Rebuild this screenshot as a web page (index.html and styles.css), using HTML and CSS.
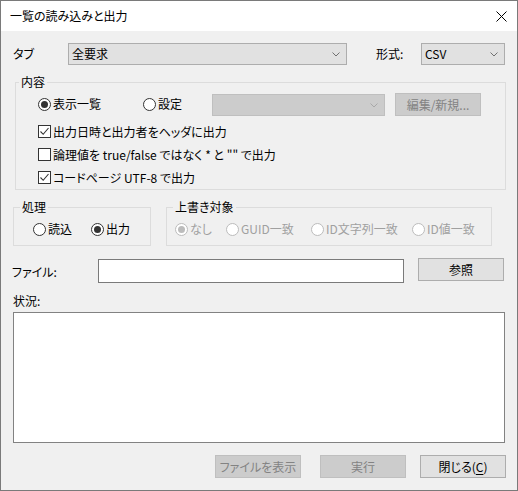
FILE: index.html
```html
<!DOCTYPE html>
<html lang="ja">
<head>
<meta charset="utf-8">
<title>一覧の読み込みと出力</title>
<link rel="stylesheet" href="styles.css">
</head>
<body>
<div class="window">
  <div class="titlebar">
    <span class="title">一覧の読み込みと出力</span>
    <svg class="close" width="11" height="11" viewBox="0 0 11 11"><path d="M0.5 0.5 L10.5 10.5 M10.5 0.5 L0.5 10.5" stroke="#000" stroke-width="1" fill="none"/></svg>
  </div>
  <div class="content">
    <div class="tab-row">
      <span class="lbl-tab">タブ</span>
      <div class="combo combo-tab"><span>全要求</span><svg class="chev" width="8" height="5" viewBox="0 0 8 5"><path d="M0.5 0.5 L4 4 L7.5 0.5" stroke="#707070" fill="none"/></svg></div>
      <span class="lbl-format">形式:</span>
      <div class="combo combo-format"><span>CSV</span><svg class="chev" width="8" height="5" viewBox="0 0 8 5"><path d="M0.5 0.5 L4 4 L7.5 0.5" stroke="#707070" fill="none"/></svg></div>
    </div>

    <fieldset class="group group-content">
      <legend>内容</legend>
      <div class="group-body">
        <div class="mode-row">
          <label class="opt opt-list"><span class="radio checked"></span>表示一覧</label>
          <label class="opt opt-setting"><span class="radio"></span>設定</label>
          <div class="combo combo-disabled"><span></span><svg class="chev" width="8" height="5" viewBox="0 0 8 5"><path d="M0.5 0.5 L4 4 L7.5 0.5" stroke="#a8a8a8" fill="none"/></svg></div>
          <button class="btn disabled btn-edit">編集/新規...</button>
        </div>
        <label class="check-row"><span class="checkbox checked"><svg width="11" height="11" viewBox="0 0 11 11"><path d="M1.5 5.5 L4.2 8.3 L9.5 2" stroke="#333" stroke-width="1.1" fill="none"/></svg></span>出力日時と出力者をヘッダに出力</label>
        <label class="check-row"><span class="checkbox"></span>論理値を true/false ではなく * と "" で出力</label>
        <label class="check-row"><span class="checkbox checked"><svg width="11" height="11" viewBox="0 0 11 11"><path d="M1.5 5.5 L4.2 8.3 L9.5 2" stroke="#333" stroke-width="1.1" fill="none"/></svg></span>コードページ UTF-8 で出力</label>
      </div>
    </fieldset>

    <div class="groups-row">
      <fieldset class="group group-process">
        <legend>処理</legend>
        <div class="radio-row">
          <label class="opt opt-read"><span class="radio"></span>読込</label>
          <label class="opt"><span class="radio checked"></span>出力</label>
        </div>
      </fieldset>
      <fieldset class="group group-overwrite">
        <legend>上書き対象</legend>
        <div class="radio-row">
          <label class="opt off w-none"><span class="radio checked"></span>なし</label>
          <label class="opt off w-guid"><span class="radio"></span>GUID一致</label>
          <label class="opt off w-idstr"><span class="radio"></span>ID文字列一致</label>
          <label class="opt off"><span class="radio"></span>ID値一致</label>
        </div>
      </fieldset>
    </div>

    <div class="file-row">
      <span class="lbl-file">ファイル:</span>
      <div class="textbox file-box"></div>
      <button class="btn">参照</button>
    </div>

    <div class="lbl-status">状況:</div>
    <div class="textbox status-box"></div>

    <div class="button-row">
      <button class="btn disabled">ファイルを表示</button>
      <button class="btn disabled btn-run">実行</button>
      <button class="btn">閉じる(<u>C</u>)</button>
    </div>
  </div>
</div>
</body>
</html>
```

FILE: styles.css
```css
* { box-sizing: border-box; }
html, body { margin: 0; padding: 0; background: #f0f0f0; }
body {
  font-family: "Noto Sans CJK JP", sans-serif;
  font-size: 12px;
  line-height: 16px;
  color: #000;
  font-feature-settings: "palt";
}
.window {
  width: 518px;
  height: 491px;
  border: 1px solid #7a7a7a;
  background: #f0f0f0;
}
.titlebar {
  height: 30px;
  background: #fff;
  display: flex;
  align-items: center;
  justify-content: space-between;
  padding: 0 10px 0 9px;
}
.title { font-size: 12px; }
.close { display: block; }
.content { padding: 0 11px 0 12px; }

.tab-row {
  margin-top: 12px;
  height: 22px;
  display: flex;
  align-items: center;
}
.lbl-tab { width: 55px; }
.lbl-format { width: 45px; margin-left: 29px; }
.combo {
  height: 22px;
  border: 1px solid #adadad;
  background: #e1e1e1;
  display: flex;
  align-items: center;
  justify-content: space-between;
  padding: 0 6px 0 3px;
}
.combo-tab { width: 279px; }
.combo-format { width: 84px; }
.combo-disabled {
  width: 173px;
  background: #cccccc;
  border-color: #bfbfbf;
  margin-top: 1px;
}
.chev { display: block; }

.group {
  margin: 0;
  padding: 0;
  border: 1px solid #dcdcdc;
  min-width: 0;
}
.group legend {
  padding: 0 2px;
  line-height: 14px;
}
.group-content {
  margin: 10px 0 0 2px;
}
.group-content legend { margin-left: 3px; }
.group-body { padding-left: 22px; }
.mode-row {
  margin-top: 4px;
  height: 23px;
  display: flex;
  align-items: flex-start;
}
.opt {
  display: flex;
  align-items: center;
  height: 22px;
  white-space: nowrap;
}
.opt-list { width: 105px; }
.opt-setting { width: 69px; }
.btn-edit { margin-left: 10px; }
.check-row {
  display: flex;
  align-items: center;
  height: 23px;
  white-space: nowrap;
}
.mode-row + .check-row { margin-top: 4px; }

.radio {
  width: 13px;
  height: 13px;
  border: 1px solid #333;
  border-radius: 50%;
  background: #fff;
  margin-right: 2px;
  display: flex;
  align-items: center;
  justify-content: center;
  flex: none;
}
.radio.checked::after {
  content: "";
  width: 7px;
  height: 7px;
  border-radius: 50%;
  background: #333;
}
.opt.off { color: #a0a0a0; }
.opt.off .radio { border-color: #bcbcbc; }
.opt.off .radio.checked::after { background: #bcbcbc; }

.checkbox {
  width: 13px;
  height: 13px;
  border: 1px solid #333;
  background: #fff;
  margin-right: 2px;
  flex: none;
  display: flex;
  align-items: center;
  justify-content: center;
}
.checkbox svg { display: block; }

.groups-row {
  display: flex;
  margin-top: 10px;
  gap: 15px;
}
.group-process { width: 138px; }
.group-process legend { margin-left: 6px; }
.group-overwrite { width: 326px; }
.group-overwrite legend { margin-left: 6px; }
.radio-row {
  display: flex;
  margin-top: 4px;
  padding-bottom: 5px;
  height: 27px;
}
.group-process .radio-row { padding-left: 19px; }
.group-overwrite .radio-row { padding-left: 8px; }
.opt-read { width: 58px; }
.w-none { width: 51px; }
.w-guid { width: 85px; }
.w-idstr { width: 101px; }

.file-row {
  margin-top: 12px;
  display: flex;
  align-items: flex-start;
}
.lbl-file { width: 86px; line-height: 25px; margin-top: 1px; margin-left: -1px; }
.textbox {
  background: #fff;
  border: 1px solid #7a7a7a;
}
.file-box {
  width: 306px;
  height: 24px;
  margin-top: 1px;
  margin-right: 14px;
}
.btn {
  font: inherit;
  font-feature-settings: "palt";
  width: 86px;
  height: 23px;
  border: 1px solid #adadad;
  background: #e1e1e1;
  color: #000;
  padding: 0;
  line-height: 21px;
  flex: none;
}
.btn.disabled {
  background: #cccccc;
  border-color: #bfbfbf;
  color: #838383;
}
.btn u { text-underline-offset: 2px; }

.lbl-status { margin-top: 9px; }
.status-box {
  margin-top: 3px;
  width: 492px;
  height: 131px;
  border-color: #828282;
}
.button-row {
  margin-top: 12px;
  display: flex;
  justify-content: flex-end;
}
.btn-run { margin-left: 19px; margin-right: 14px; }
```
